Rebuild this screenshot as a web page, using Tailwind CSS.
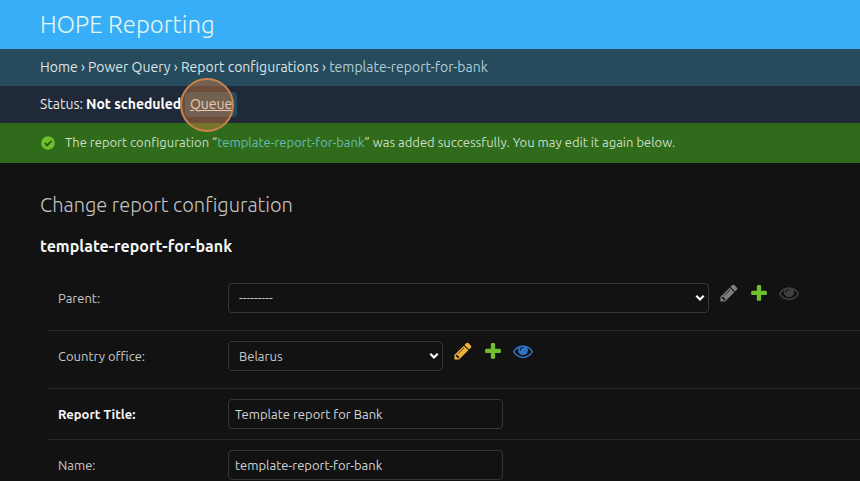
<!DOCTYPE html>
<html lang="en">
<head>
<meta charset="utf-8">
<title>Change report configuration</title>
<script src="https://cdn.jsdelivr.net/npm/@tailwindcss/browser@4"></script>
</head>
<body class="h-[481px] overflow-hidden bg-[#121212] font-['Ubuntu','Noto_Sans',sans-serif] text-[13px] text-[#d4d4d4]">
<svg class="hidden">
  <symbol id="pencil" viewBox="0 0 1792 1792"><path d="M491 1536l91-91-235-235-91 91v107h128v128h107zm523-928q0-22-22-22-10 0-17 7l-542 542q-7 7-7 17 0 22 22 22 10 0 17-7l542-542q7-7 7-17zm-54-192l416 416-832 832h-416v-416zm683 96q0 53-37 90l-166 166-416-416 166-165q36-38 90-38 53 0 91 38l235 234q37 39 37 91z"/></symbol>
  <symbol id="plus" viewBox="0 0 1792 1792"><path d="M1600 796v192q0 40-28 68t-68 28h-416v416q0 40-28 68t-68 28h-192q-40 0-68-28t-28-68v-416h-416q-40 0-68-28t-28-68v-192q0-40 28-68t68-28h416v-416q0-40 28-68t68-28h192q40 0 68 28t28 68v416h416q40 0 68 28t28 68z"/></symbol>
  <symbol id="eye" viewBox="0 0 1792 1792"><path d="M1664 960q-152-236-381-353 61 104 61 225 0 185-131.5 316.5t-316.5 131.5-316.5-131.5-131.5-316.5q0-121 61-225-229 117-381 353 133 205 333.5 326.5t434.5 121.5 434.5-121.5 333.5-326.5zm-720-384q0-20-14-34t-34-14q-125 0-214.5 89.5t-89.5 214.5q0 20 14 34t34 14 34-14 14-34q0-86 61-147t147-61q20 0 34-14t14-34zm848 384q0 34-20 69-140 230-376.5 368.5t-499.5 138.5-499.5-139-376.5-368q-20-35-20-69t20-69q140-229 376.5-368t499.5-139 499.5 139 376.5 368q20 35 20 69z"/></symbol>
  <symbol id="chevron" viewBox="0 0 10 8"><path d="M1.3 1.8 5 5.5 8.7 1.8" fill="none" stroke="currentColor" stroke-width="2.2"/></symbol>
</svg>
<header class="flex h-[49px] items-center bg-[#38aef8] pl-10">
  <h1 class="whitespace-nowrap text-2xl font-light text-[#e4f6ee]">HOPE Reporting</h1>
</header>
<nav class="flex h-[37px] items-center whitespace-pre bg-[#264b5d] pb-[2px] pl-10 text-sm text-[#dce5e9]"><span>Home › Power Query › Report configurations › </span><span class="text-[#b0cbd8]">template-report-for-bank</span></nav>
<div class="relative flex h-[37px] items-center whitespace-pre bg-[#1f2937] pl-10 text-sm text-[#e5e7eb]">
  <span class="w-[46px] pb-[2px]">Status:</span><b class="w-[99px] pb-[2px] font-bold text-white">Not scheduled</b><a class="flex h-[25px] w-[52px] items-center rounded bg-[#264b5d] pb-[2px] pl-[5px] text-[#f4f4f4] underline">Queue</a>
  <i class="absolute left-[180px] top-[-8px] z-10 size-[54px] rounded-full border-2 border-[#c9834d] bg-[#e78341]/40"></i>
</div>
<div class="flex h-10 items-center whitespace-pre bg-[#306b1c] pl-[41px] text-[#c8dfc3]">
  <svg class="mr-[10px] size-[14px]" viewBox="0 0 14 14"><circle cx="7" cy="7" r="6.8" fill="#70bf2b"/><path d="m3.8 7 2.3 2.4 4.4-4.5" fill="none" stroke="#285d18" stroke-width="1.9"/></svg>
  <span>The report configuration “<span class="text-[#68bbb0]">template-report-for-bank</span>” was added successfully. You may edit it again below.</span>
</div>
<main class="flex flex-col">
  <h2 class="mt-[28px] pl-10 text-xl leading-7 font-light text-[#c4c4c4]">Change report configuration</h2>
  <h3 class="mt-[15px] pl-10 text-base leading-6 font-bold text-[#f5f5f5]">template-report-for-bank</h3>
  <form class="ml-12 mt-[9px] text-[#c8c8c8]">
    <div class="flex h-[64px] items-start border-b border-[#292929] pl-[10px] pt-[16px]">
      <label class="w-[170px] leading-[30px]">Parent:</label>
      <div class="flex h-[30px] w-[481px] items-center justify-between rounded-[4px] border border-[#363636] pl-[10px] pr-[3px]"><span>---------</span><svg class="h-2 w-[10px] text-white"><use href="#chevron"/></svg></div>
      <div class="ml-[10px] flex h-5 gap-[10px]">
        <svg class="size-5 fill-[#7d7d7d]"><use href="#pencil"/></svg><svg class="size-5 fill-[#70bf2b]"><use href="#plus"/></svg><svg class="size-5 fill-[#414141]"><use href="#eye"/></svg>
      </div>
    </div>
    <div class="flex h-[58px] items-start border-b border-[#292929] pl-[10px] pt-[10px]">
      <label class="w-[170px] leading-[30px]">Country office:</label>
      <div class="flex h-[30px] w-[215px] items-center justify-between rounded-[4px] border border-[#363636] pl-[10px] pr-[3px]"><span class="pt-px">Belarus</span><svg class="h-2 w-[10px] text-white"><use href="#chevron"/></svg></div>
      <div class="ml-[10px] flex h-5 gap-[10px]">
        <svg class="size-5 fill-[#efb338]"><use href="#pencil"/></svg><svg class="size-5 fill-[#70bf2b]"><use href="#plus"/></svg><svg class="size-5 fill-[#2f72c5]"><use href="#eye"/></svg>
      </div>
    </div>
    <div class="flex h-[51px] items-start border-b border-[#292929] pl-[10px] pt-[10px]">
      <label class="w-[170px] leading-[30px] font-bold text-[#f5f5f5]">Report Title:</label>
      <input class="h-[30px] w-[275px] rounded-[4px] border border-[#363636] px-[6px] text-[#d4d4d4]" value="Template report for Bank">
    </div>
    <div class="flex h-[51px] items-start pl-[10px] pt-[10px]">
      <label class="w-[170px] leading-[30px]">Name:</label>
      <input class="h-[30px] w-[275px] rounded-[4px] border border-[#363636] px-[6px] text-[#d4d4d4]" value="template-report-for-bank">
    </div>
  </form>
</main>
</body>
</html>
